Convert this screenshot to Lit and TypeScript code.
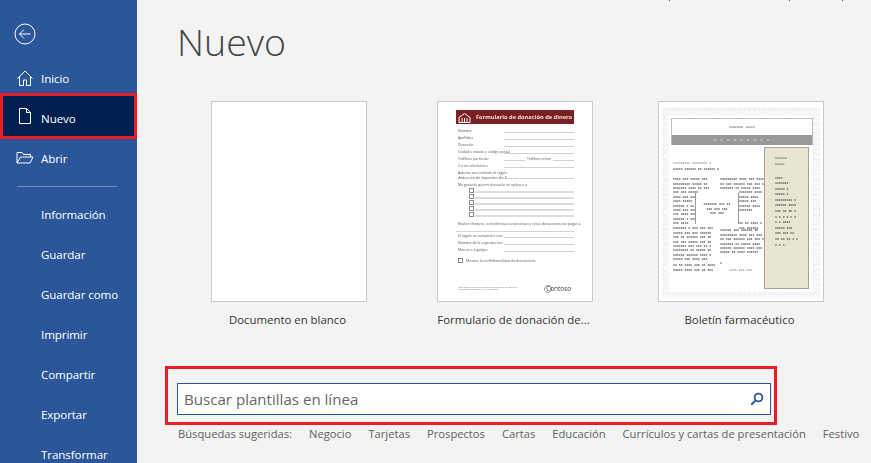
import { LitElement, html, css, svg } from "lit";
import { customElement } from "lit/decorators.js";

const FORM_ROWS = ["Nombre", "Apellidos", "Dirección", "Ciudad o estado y código postal"];

@customElement("form-thumb")
class FormThumb extends LitElement {
  static styles = css`
    :host { display: block; width: 100%; height: 100%; box-sizing: border-box; padding: 8px 18px 0 18px; font-family: "Open Sans", sans-serif; font-size: 3.5px; color: #555; filter: blur(0.3px); }
    .head { height: 14px; background: #7a1f22; color: #f0dcdc; font-size: 5.7px; font-weight: 700; display: flex; align-items: center; gap: 5px; padding: 0 2px; margin-bottom: 3px; white-space: nowrap; }
    .head svg { width: 13px; height: 11px; flex: none; }
    .row { display: flex; height: 7px; align-items: center; padding-left: 2px; }
    .row span { width: 46px; flex: none; white-space: nowrap; overflow: visible; }
    .row span.short { width: auto; padding: 0 2px; }
    .line { flex: 1; height: 1px; background: #d2d2d2; margin-bottom: 1px; align-self: flex-end; }
    .two { height: 9px; line-height: 4.4px; margin: 2px 0 2.3px; }
    .para { height: 5px; line-height: 5px; padding-left: 2px; white-space: nowrap; }
    .chk { display: flex; height: 6px; align-items: center; padding-left: 13px; gap: 1px; }
    .chk i { width: 3px; height: 3px; border: 1px solid #8a8a8a; flex: none; }
    .chk b { flex: 1; height: 2px; background: #dedede; margin-top: 3px; }
    .gap { height: 3.5px; }
    .rule { height: 1px; background: #d2d2d2; margin-top: 5px; }
    .show { display: flex; gap: 3px; align-items: center; height: 5px; margin: 5px 0 0 2px; white-space: nowrap; }
    .show i { width: 3px; height: 3px; border: 1px solid #8a8a8a; flex: none; }
    .foot { display: flex; justify-content: space-between; align-items: center; height: 8px; margin: 22.5px 0 0 2px; font-size: 2.2px; line-height: 2.6px; color: #777; }
    .logo { display: flex; align-items: center; font-size: 6.4px; color: #444; white-space: nowrap; margin-right: 3px; }
    .logo svg { width: 8px; height: 8px; margin-right: -6px; flex: none; }
  `;
  render() {
    return html`
      <div class="head">
        <svg viewBox="0 0 13 11" fill="none" stroke="#fff" stroke-width="1"><path d="M1 5.5 6.5 1.5l5.5 4v5H1zM4 6v4M9 6v4M6.5 6v4"/></svg>
        Formulario de donación de dinero
      </div>
      ${FORM_ROWS.map(t => html`<div class="row"><span>${t}</span><div class="line"></div></div>`)}
      <div class="row"><span>Teléfono particular</span><div class="line"></div><span class="short">Teléfono móvil</span><div class="line"></div></div>
      <div class="row"><span>Correo electrónico</span><div class="line"></div></div>
      <div class="row two"><span>Adjunto esta incluido el regalo<br>deducción de impuestos de: $</span><div class="line"></div></div>
      <div class="para">Me gustaría que mi donación se aplicara a:</div>
      ${[0, 1, 2, 3, 4].map(() => html`<div class="chk"><i></i><b></b></div>`)}
      <div class="gap"></div>
      <div class="para">Realice cheques, coincidencias corporativas y otras donaciones por pagar a:</div>
      <div class="rule"></div>
      <div class="row"><span>El regalo se compartirá con:</span><div class="line"></div></div>
      <div class="row"><span>Nombre de la organización:</span><div class="line"></div></div>
      <div class="row"><span>Marcas o logotipo:</span><div class="line"></div></div>
      <div class="show"><i></i>Mostrar la confidencialidad de donaciones.</div>
      <div class="foot"><div>Gogo 2020. Por sí solo la página para rellenar su donativo<br>de formación solo con el fin de logotipo</div>
        <div class="logo"><svg viewBox="0 0 8 8" fill="none" stroke="#444" stroke-width="0.9" stroke-dasharray="1 0.5"><circle cx="4" cy="4" r="3.4"/></svg>Contoso</div></div>
    `;
  }
}

const TOP_A = ["xxxx xxx xxxxx xxx", "xxxxxxxxx xxxxx xx", "xxxxxxx xxxx xx xxx"];
const MID_A = ["xxx xxx xxxxx", "xxxx xxx xxx", "xxxx xxxxx", "xxxxxx x xx", "xxxx xxx xxx", "xxx xxxx xxx", "xxxxxx x xxx", "xxx xxxx"];
const BOT_A = ["xxxxxxx x xxx xxx xxx", "xxxxx xxx xxx xxxxxx", "xxx xx xxxxxx xxx xx", "xxx xxx xxxxx xxx xx", "xxxxxxx xxx xxx xx x", "xxxxxxxx xx xxxxx xx", "xxxxxx xxxxxx xxxx x", "xxxxx xxx xxxx xxx"];
const TOP_B = ["xxxxxxxxx xxxx xxx xxxxx", "xx xxx xxxxxx xxx xxx xx", "xxxxxxx xx xxxxx xxxx"];
const MID_B = ["xxxxxxx xxxx", "xxxxx xxxx", "xxxxx xxx", "xxxxxx xxxx", "xxxxxxx", "", "", "xx xx xxxx x", "xxx xxxxxx"];
const BOT_B = ["xxxxxx xxx xxxxxx xx", "xxxxxxxxx xxxx xxx xxx", "xx xxx xxxxxx xxx xxx xx", "xxxxxxx xx xxxxx xxxx", "xxxxxx xxxxxx xxxx xxx", "xxxxx xx xxxx xxxxxx"];
const SIDE = ["xxxx", "xxxxxxx", "xxxxx x", "xxxxx x", "xxxxxxxxx x", "xxxxxx xxxx", "xxx xx xx x", "x x x x x x", "x x xxxx", "xxxxx xxx", "xxx xxx xx", "xx xx xx x x", "x x x"];

const lines = (a: string[]) => a.map(t => html`<p>${t}</p>`);

@customElement("news-thumb")
class NewsThumb extends LitElement {
  static styles = css`
    :host { display: block; width: 100%; height: 100%; box-sizing: border-box; padding: 5px 3px 3px; font-family: "Liberation Mono", monospace; font-size: 3.2px; color: #4a4a4a; font-weight: 700; filter: blur(0.3px); }
    .frame { height: 100%; box-sizing: border-box; padding: 8px 8px 6px 7px; background-color: #f8f8f8;
      background-image: radial-gradient(#e0e0e0 0.6px, transparent 0.7px), radial-gradient(#e6e6e6 0.6px, transparent 0.7px), radial-gradient(#e4e4e4 0.5px, transparent 0.6px);
      background-size: 5px 7px, 7px 4px, 3px 5px; }
    .sheet { height: 100%; background: #fff; display: flex; flex-direction: column; padding-top: 3px; box-sizing: border-box; }
    .mast { height: 27px; border: 1px solid #bdbdbd; border-bottom: 0; box-sizing: border-box; display: flex; flex-direction: column; margin: 0 -1px 0 2px; flex: none; }
    .mast div { flex: 1; display: flex; align-items: center; justify-content: center; font-size: 3.9px; font-weight: 400; color: #444; }
    .mast .band { flex: none; height: 10px; color: #eee; background: #999; letter-spacing: 1px; }
    .body { display: flex; flex: 1; margin: 2px 0 0 4px; }
    .cols { width: 91px; flex: none; padding-top: 13px; box-sizing: border-box; }
    .side { width: 45px; flex: none; height: 142px; box-sizing: border-box; background: #e8e6d0; border: 1px solid #a3a396; padding: 7px 0 0 10px; }
    .side h4 { margin: 0 0 8.5px; font-size: 4px; font-weight: 400; line-height: 6px; }
    .side p { margin: 0; line-height: 5.6px; height: 5.6px; white-space: nowrap; }
    .hd { font-weight: 400; color: #777; line-height: 7px; white-space: nowrap; }
    .sub { line-height: 5px; margin-bottom: 5.3px; white-space: nowrap; }
    p { margin: 0; line-height: 4.4px; height: 4.4px; white-space: nowrap; }
    .two { display: grid; grid-template-columns: 35px 41px; column-gap: 12px; }
    .mid { display: grid; grid-template-columns: 22px 44px 22px; height: 36px; }
    .quote { text-align: center; line-height: 4.6px; border-left: 1px solid #999; border-right: 1px solid #999; margin-top: 3px; height: 31px; display: flex; align-items: center; justify-content: center; white-space: nowrap; }
    .lower { margin-top: 2px; }
    .dot { margin-top: 6px; }
    .tail { display: flex; justify-content: space-between; margin-top: -2px; padding-right: 12px; line-height: 5px; white-space: nowrap; }
    .tail span:last-child { align-self: flex-end; color: #777; font-weight: 400; }
  `;
  render() {
    return html`<div class="frame"><div class="sheet">
      <div class="mast"><div>XXXXXX XXXX</div><div class="band">x x x x x x x x x</div></div>
      <div class="body">
        <div class="cols">
          <div class="hd">xxxxxxxxx xxxxxxxx x</div>
          <div class="sub">xxxxx xxxxxx xx xxxxxx x</div>
          <div class="two"><div>${lines(TOP_A)}</div><div>${lines(TOP_B)}</div></div>
          <div class="mid">
            <div>${lines(MID_A)}</div>
            <div class="quote"><span>xxxxxxx xxx xx<br>xxx xxx xxx<br>xxx xxx</span></div>
            <div>${lines(MID_B)}</div>
          </div>
          <div class="two">
            <div>${lines(BOT_A)}</div>
            <div class="lower">${lines(BOT_B)}<p class="dot">x</p></div>
          </div>
          <div class="tail"><span>xx xx xxxx xxx xx xxxx<br>xxxxx xxxx xxx xx xxx</span><span>xxxx xxx xxx</span></div>
        </div>
        <div class="side"><h4>XXXXX<br>XXXX</h4>${lines(SIDE)}</div>
      </div>
    </div></div>`;
  }
}

const icons = {
  home: svg`<path d="M1.5 9.5 9 2l7.5 7.5M3.5 8v8.5h4V11h3v5.5h4V8" />`,
  doc: svg`<path d="M3.5 1.5h7l4 4v11h-11zM10.5 1.5v4h4" />`,
  open: svg`<path d="M1 14V3.5h5l1.5 2h7V8M1 14l3.5-6H17l-3 6z" />`,
};

@customElement("app-root")
export class AppRoot extends LitElement {
  static styles = css`
    :host { display: flex; width: 871px; height: 463px; overflow: hidden; position: relative; background: #f3f3f3; font-family: "Open Sans", "Noto Sans", sans-serif; }
    .nav { width: 137px; height: 463px; overflow: hidden; flex: none; background: #2b579a; color: #fff; box-sizing: border-box; padding-top: 23px; font-size: 11.6px; letter-spacing: -0.1px; }
    .back { display: block; width: 22px; height: 22px; margin-left: 14px; }
    .items { margin-top: 13px; display: flex; flex-direction: column; }
    .item { height: 40px; display: flex; align-items: center; padding-left: 41px; position: relative; flex: none; box-sizing: border-box; color: #fff; }
    .item svg { position: absolute; left: 16px; top: 11px; width: 18px; height: 18px; fill: none; stroke: #fff; stroke-width: 1; }
    .item.active { background: #002050; border: 3px solid #ed1c24; height: 46px; margin: -5px 0 -1px; padding: 4px 0 0 38px; }
    .item.active svg { left: 13px; top: 11px; }
    .sep { height: 1px; background: #6f8fbd; margin: 8px 20px 7px 17px; flex: none; }
    .main { flex: 1; padding: 17px 0 0 39px; min-width: 0; }
    h1 { margin: 0 0 0 1px; font-weight: 300; font-size: 37.5px; line-height: 49px; color: #444; }
    .cards { display: flex; margin-top: 35px; }
    .card { width: 226px; flex: none; display: flex; flex-direction: column; align-items: center; font-size: 11.4px; color: #333; }
    .thumb { width: 156px; height: 201px; box-sizing: border-box; background: #fff; border: 1px solid #c9c9c9; overflow: hidden; }
    .card.wide .thumb { width: 166px; }
    .label { margin-top: 9px; padding-right: 3px; line-height: 18px; white-space: nowrap; }
    .search { margin: 37px 0 0 -11px; width: 612px; height: 59px; box-sizing: border-box; border: 3px solid #ed1c24; padding: 14px 3px 0 9px; }
    .box { height: 32px; box-sizing: border-box; background: #fff; border: 1px solid #2b579a; display: flex; align-items: center; justify-content: space-between; padding: 0 6px; font-size: 15.1px; color: #666; }
    .box svg { width: 14px; height: 14px; fill: none; stroke: #2b579a; }
    .sugg { display: flex; gap: 17px; margin-left: 2px; font-size: 11.2px; line-height: 18px; color: #5f5f5f; white-space: nowrap; }
    .sugg span { flex: none; }
    .mark { position: absolute; top: 0; width: 1px; height: 1px; background: #555; }
  `;
  render() {
    const lower = ["Información", "Guardar", "Guardar como", "Imprimir", "Compartir", "Exportar", "Transformar"];
    return html`
      <nav class="nav">
        <svg class="back" viewBox="0 0 22 22" fill="none" stroke="#fff" stroke-width="1"><circle cx="11" cy="11" r="10"/><path d="M5.5 11h11M10 6.5 5.5 11l4.5 4.5"/></svg>
        <div class="items">
          <div class="item"><svg viewBox="0 0 18 18">${icons.home}</svg>Inicio</div>
          <div class="item active"><svg viewBox="0 0 18 18">${icons.doc}</svg>Nuevo</div>
          <div class="item"><svg viewBox="0 0 18 18">${icons.open}</svg>Abrir</div>
          <div class="sep"></div>
          ${lower.map(t => html`<div class="item">${t}</div>`)}
        </div>
      </nav>
      <main class="main">
        <h1>Nuevo</h1>
        <div class="cards">
          <div class="card"><div class="thumb"></div><div class="label">Documento en blanco</div></div>
          <div class="card"><div class="thumb"><form-thumb></form-thumb></div><div class="label">Formulario de donación de...</div></div>
          <div class="card wide"><div class="thumb"><news-thumb></news-thumb></div><div class="label">Boletín farmacéutico</div></div>
        </div>
        <div class="search">
          <div class="box">Buscar plantillas en línea
            <svg viewBox="0 0 14 14"><circle cx="8.5" cy="5.5" r="3.9" stroke-width="1.8"/><path d="M5.6 8.4 1.3 12.7" stroke-width="2"/></svg>
          </div>
        </div>
        <div class="sugg">
          <span>Búsquedas sugeridas:</span><span>Negocio</span><span>Tarjetas</span><span>Prospectos</span><span>Cartas</span><span>Educación</span><span>Currículos y cartas de presentación</span><span>Festivo</span>
        </div>
      </main>
      <i class="mark" style="left:669px"></i><i class="mark" style="left:789px"></i><i class="mark" style="left:842px"></i>
    `;
  }
}
